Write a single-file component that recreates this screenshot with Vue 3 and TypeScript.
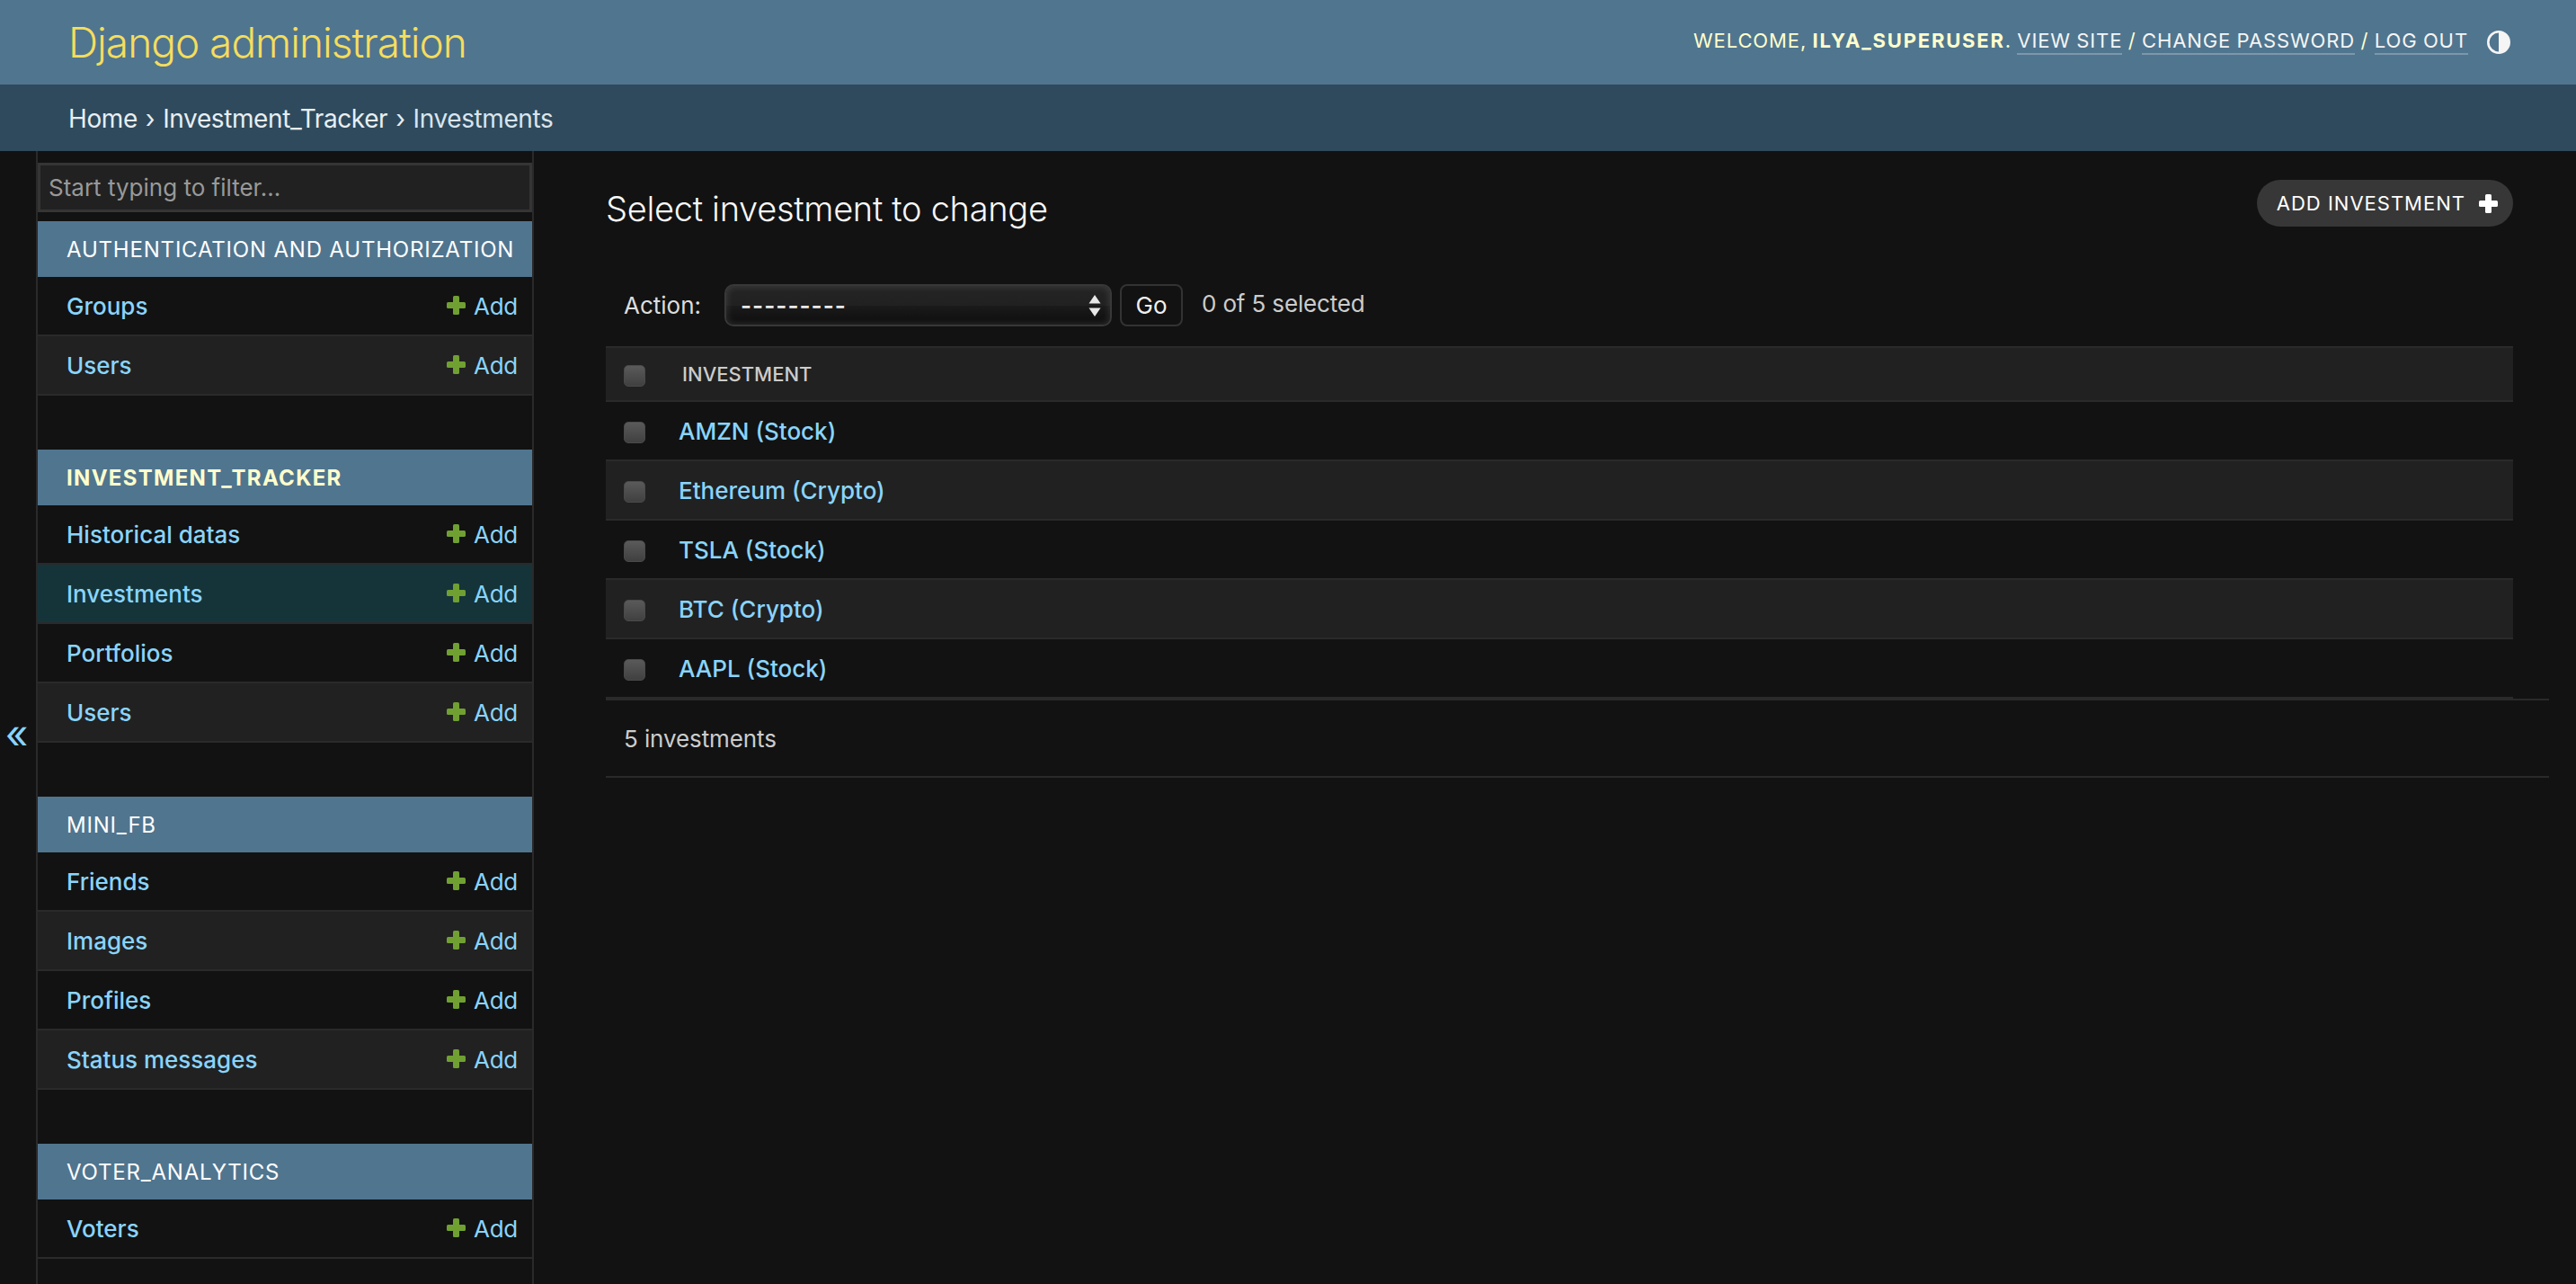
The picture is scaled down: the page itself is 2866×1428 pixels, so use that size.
<script setup lang="ts">
interface Model {
  name: string
  current?: boolean
}

interface AppModule {
  title: string
  current?: boolean
  models: Model[]
}

const modules: AppModule[] = [
  {
    title: 'Authentication and Authorization',
    models: [{ name: 'Groups' }, { name: 'Users' }],
  },
  {
    title: 'Investment_Tracker',
    current: true,
    models: [
      { name: 'Historical datas' },
      { name: 'Investments', current: true },
      { name: 'Portfolios' },
      { name: 'Users' },
    ],
  },
  {
    title: 'Mini_Fb',
    models: [
      { name: 'Friends' },
      { name: 'Images' },
      { name: 'Profiles' },
      { name: 'Status messages' },
    ],
  },
  {
    title: 'Voter_Analytics',
    models: [{ name: 'Voters' }],
  },
]

const investments = [
  'AMZN (Stock)',
  'Ethereum (Crypto)',
  'TSLA (Stock)',
  'BTC (Crypto)',
  'AAPL (Stock)',
]
</script>

<template>
  <div class="page">
    <header class="header">
      <div class="branding">Django administration</div>
      <div class="user-tools">
        <span class="tools-text">
          Welcome, <strong>ilya_superuser</strong>.
          <a class="tool-link">View site</a> /
          <a class="tool-link">Change password</a> /
          <a class="tool-link">Log out</a>
        </span>
        <svg class="theme-icon" viewBox="0 0 26 26">
          <circle cx="13" cy="13" r="11.7" fill="none" stroke="#f5f5f5" stroke-width="2.6" />
          <path d="M13 1.5a11.5 11.5 0 0 1 0 23z" fill="#f5f5f5" />
        </svg>
      </div>
    </header>

    <nav class="breadcrumbs">
      <a>Home</a><span class="sep">›</span><a>Investment_Tracker</a><span class="sep">›</span><span class="crumb-current">Investments</span>
    </nav>

    <div class="main">
      <div class="toggle-col">
        <span class="toggle">«</span>
      </div>

      <aside class="sidebar">
        <input class="filter" type="text" placeholder="Start typing to filter..." />
        <section v-for="mod in modules" :key="mod.title" class="module">
          <h2 class="caption" :class="{ 'caption-current': mod.current }">{{ mod.title }}</h2>
          <div
            v-for="model in mod.models"
            :key="model.name"
            class="model-row"
            :class="{ 'model-current': model.current }"
          >
            <a class="link">{{ model.name }}</a>
            <a class="add-link">
              <svg class="add-icon" viewBox="0 0 21 21">
                <rect x="7" y="0" width="7" height="21" rx="1.6" fill="#70a032" />
                <rect x="0" y="7" width="21" height="7" rx="1.6" fill="#70a032" />
              </svg>
              Add
            </a>
          </div>
        </section>
      </aside>

      <main class="content">
        <div class="title-row">
          <h1 class="title">Select investment to change</h1>
          <a class="add-button">
            Add investment
            <svg class="add-button-icon" viewBox="0 0 21 21">
              <rect x="7" y="0" width="7" height="21" rx="1.6" fill="#fff" />
              <rect x="0" y="7" width="21" height="7" rx="1.6" fill="#fff" />
            </svg>
          </a>
        </div>

        <div class="actions">
          <label class="action-label">Action:</label>
          <div class="select-wrap">
            <select class="select">
              <option>---------</option>
            </select>
            <svg class="select-arrows" viewBox="0 0 14 24">
              <path d="M7 0l6.5 9.5H.5zM7 24L.5 14.5h13z" fill="#e8e8e8" />
            </svg>
          </div>
          <button class="go">Go</button>
          <span class="selected">0 of 5 selected</span>
        </div>

        <div class="table">
          <div class="table-head">
            <input class="check" type="checkbox" />
            <span class="column-title">Investment</span>
          </div>
          <div v-for="item in investments" :key="item" class="table-row">
            <input class="check" type="checkbox" />
            <a class="link row-link">{{ item }}</a>
          </div>
        </div>

        <p class="paginator">5 investments</p>
      </main>
    </div>
  </div>
</template>

<style>
html,
body {
  margin: 0;
  background: #121212;
  overflow: hidden;
}
</style>

<style scoped>
.page {
  display: flex;
  flex-direction: column;
  height: 1428px;
  overflow: hidden;
  background: #121212;
  color: #eeeeee;
  font-family: Inter, "Liberation Sans", sans-serif;
}

.header {
  display: flex;
  align-items: center;
  justify-content: space-between;
  box-sizing: border-box;
  height: 94px;
  padding: 0 73px 0 76px;
  background: #50758f;
}

.branding {
  font-size: 46px;
  font-weight: 300;
  letter-spacing: -1px;
  color: #f5dd5d;
}

.user-tools {
  display: flex;
  align-items: center;
  gap: 21px;
}

.tools-text {
  margin-top: -4px;
  font-size: 22px;
  letter-spacing: 0.9px;
  word-spacing: -0.7px;
  text-transform: uppercase;
  color: #ffffcc;
}

.tools-text strong {
  font-weight: 700;
  letter-spacing: 1.8px;
}

.tool-link {
  padding-bottom: 1px;
  color: #f5f5f5;
  border-bottom: 2px solid rgba(255, 255, 255, 0.25);
}

.theme-icon {
  width: 26px;
  height: 26px;
}

.breadcrumbs {
  display: flex;
  align-items: center;
  box-sizing: border-box;
  height: 74px;
  padding: 1px 0 0 76px;
  background: #2f4a5c;
  font-size: 28px;
  letter-spacing: -0.4px;
  color: #e8eef2;
}

.sep {
  margin: 0 9px;
}

.crumb-current {
  color: #d8e5ee;
}

.main {
  display: flex;
  flex: 1;
  min-height: 0;
}

.toggle-col {
  box-sizing: border-box;
  width: 40px;
  padding: 622px 3px 0 0;
  text-align: center;
}

.toggle {
  font-size: 44px;
  line-height: 52px;
  color: #8ad4fb;
}

.sidebar {
  box-sizing: border-box;
  flex-shrink: 0;
  width: 554px;
  padding-top: 13px;
  border-left: 2px solid #2a2a2a;
  border-right: 2px solid #2a2a2a;
}

.filter {
  display: block;
  box-sizing: border-box;
  width: 100%;
  height: 55px;
  margin-bottom: 10px;
  padding: 0 9px;
  border: 3px solid #353535;
  background: #212121;
  font-family: inherit;
  font-size: 26px;
  color: #eeeeee;
}

.filter::placeholder {
  color: #999999;
}

.module {
  margin-bottom: 60px;
}

.caption {
  box-sizing: border-box;
  height: 62px;
  margin: 0;
  padding-left: 32px;
  background: #50758f;
  font-size: 24px;
  font-weight: 400;
  line-height: 64px;
  letter-spacing: 0.8px;
  text-transform: uppercase;
  color: #ffffff;
  white-space: nowrap;
}

.caption-current {
  font-weight: 700;
  letter-spacing: 1.3px;
  color: #ffffcc;
}

.model-row {
  display: flex;
  align-items: center;
  justify-content: space-between;
  box-sizing: border-box;
  height: 66px;
  padding: 0 16px 0 32px;
  border-bottom: 2px solid #2a2a2a;
  font-size: 26px;
}

.model-row:nth-child(odd) {
  background: #212121;
}

.model-current,
.model-row.model-current:nth-child(odd) {
  background: #14343a;
}

.link {
  font-weight: 500;
  color: #8ad4fb;
}

.add-link {
  display: flex;
  align-items: center;
  gap: 9px;
  letter-spacing: -0.3px;
  color: #8ad4fb;
}

.add-icon {
  width: 21px;
  height: 21px;
  margin-top: -2px;
}

.content {
  flex: 1;
  min-width: 0;
  padding: 0 70px 0 80px;
}

.title-row {
  display: flex;
  align-items: flex-start;
  justify-content: space-between;
  height: 148px;
  padding-top: 32px;
  box-sizing: border-box;
}

.title {
  margin: 0;
  font-size: 38px;
  font-weight: 300;
  line-height: 64px;
  letter-spacing: -0.3px;
  color: #f8f8f8;
}

.add-button {
  display: flex;
  align-items: center;
  gap: 15px;
  box-sizing: border-box;
  height: 52px;
  padding: 0 17px 0 22px;
  border-radius: 26px;
  background: #373737;
  font-size: 22px;
  font-weight: 400;
  letter-spacing: 1px;
  text-transform: uppercase;
  color: #ffffff;
}

.add-button-icon {
  width: 21px;
  height: 21px;
}

.actions {
  display: flex;
  align-items: center;
  height: 47px;
  padding-left: 20px;
  font-size: 26px;
}

.action-label {
  width: 112px;
  color: #dddddd;
}

.select-wrap {
  position: relative;
  display: flex;
  width: 431px;
  height: 47px;
}

.select {
  width: 100%;
  height: 100%;
  padding: 0 16px;
  appearance: none;
  border: 2px solid #383838;
  border-radius: 10px;
  background: linear-gradient(180deg, #242424 0%, #212121 50%, #1b1b1b 52%, #101010 88%, #101010 100%);
  box-shadow: inset 0 0 8px rgba(255, 255, 255, 0.14);
  font-family: inherit;
  font-size: 26px;
  font-weight: 600;
  letter-spacing: 1px;
  color: #e8e8e8;
}

.select-arrows {
  position: absolute;
  top: 12px;
  right: 12px;
  width: 14px;
  height: 24px;
}

.go {
  box-sizing: border-box;
  width: 70px;
  height: 47px;
  margin-left: 9px;
  border: 2px solid #333333;
  border-radius: 8px;
  background: #121212;
  font-family: inherit;
  font-size: 26px;
  color: #f0f0f0;
}

.selected {
  margin: -4px 0 0 21px;
  letter-spacing: -0.15px;
  color: #cccccc;
}

.table {
  margin-top: 22px;
  border-bottom: 2px solid #2a2a2a;
}

.table-head {
  display: flex;
  align-items: center;
  box-sizing: border-box;
  height: 60px;
  padding: 0 0 0 20px;
  background: #212121;
  border-top: 2px solid #2a2a2a;
}

.column-title {
  margin-left: 41px;
  font-size: 22px;
  font-weight: 500;
  text-transform: uppercase;
  color: #cccccc;
}

.table-row {
  display: flex;
  align-items: center;
  box-sizing: border-box;
  height: 66px;
  padding-left: 20px;
  border-top: 2px solid #2a2a2a;
  font-size: 26px;
}

.table-row:nth-child(odd) {
  background: #212121;
}

.row-link {
  margin-left: 37px;
}

.check {
  flex-shrink: 0;
  width: 24px;
  height: 24px;
  margin: 4px 0 0;
  appearance: none;
  border: 1px solid #4a4a4a;
  border-radius: 5px;
  background: linear-gradient(180deg, #5a5a5a, #404040);
}

.paginator {
  box-sizing: border-box;
  height: 88px;
  margin: 0 -40px 0 0;
  padding-left: 20px;
  border-top: 2px solid #2a2a2a;
  border-bottom: 2px solid #2a2a2a;
  font-size: 26px;
  line-height: 86px;
  letter-spacing: -0.1px;
  color: #cccccc;
}
</style>
